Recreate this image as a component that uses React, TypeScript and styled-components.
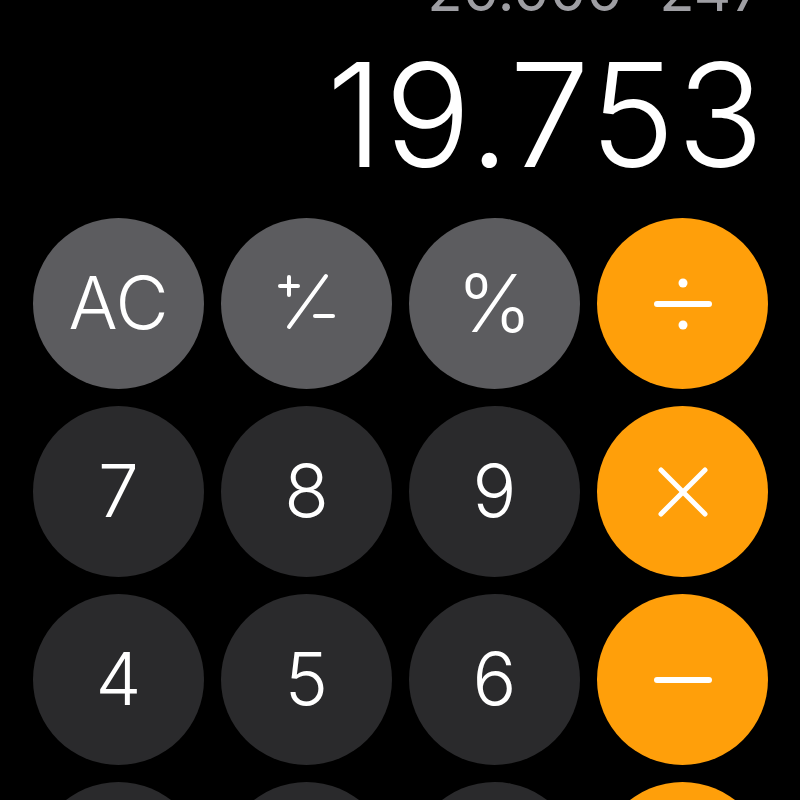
import React from "react";
import styled, { createGlobalStyle } from "styled-components";

const Global = createGlobalStyle`
  html, body {
    margin: 0;
    padding: 0;
    background: #000;
    overflow: hidden;
    height: 100%;
  }
  body {
    font-family: Inter, "Liberation Sans", sans-serif;
    -webkit-font-smoothing: antialiased;
  }
`;

const Screen = styled.div`
  width: 800px;
  height: 800px;
  background: #000;
  box-sizing: border-box;
  padding: 0 32px 0 33px;
  display: flex;
  flex-direction: column;
  overflow: hidden;
`;

const Display = styled.div`
  height: 218px;
  flex: 0 0 218px;
  display: flex;
  flex-direction: column;
  justify-content: flex-end;
  align-items: flex-end;
  padding-right: 4px;
`;

const Expression = styled.div`
  font-size: 58px;
  line-height: 1;
  font-weight: 400;
  color: #9e9ea3;
  margin-bottom: 24px;
  white-space: nowrap;
`;

const Result = styled.div`
  font-size: 144px;
  line-height: 1;
  font-weight: 300;
  color: #fff;
  margin-bottom: 31px;
  white-space: nowrap;
  letter-spacing: 1.5px;
  margin-right: -1.5px;
`;

const Pad = styled.div`
  display: grid;
  grid-template-columns: repeat(4, 171px);
  grid-auto-rows: 171px;
  column-gap: 17px;
  row-gap: 17px;
`;

type Kind = "fn" | "num" | "op";

const Key = styled.button<{ $kind: Kind }>`
  width: 171px;
  height: 171px;
  border-radius: 50%;
  border: none;
  padding: 0;
  margin: 0;
  display: flex;
  align-items: center;
  justify-content: center;
  font-family: Inter, "Liberation Sans", sans-serif;
  font-size: 73px;
  font-weight: 300;
  line-height: 1;
  color: #fff;
  background: ${(p) =>
    p.$kind === "fn" ? "#5c5c5f" : p.$kind === "op" ? "#ff9f0a" : "#2a2a2c"};
`;

const Label = styled.span<{ $size?: number }>`
  display: block;
  font-size: ${(p) => (p.$size ? `${p.$size}px` : "inherit")};
  transform: translateY(-1px);
`;

const Icon = styled.svg`
  display: block;
  overflow: visible;
`;

const PlusMinus = () => (
  <Icon width="60" height="60" viewBox="0 0 60 60" stroke="#fff" strokeLinecap="round" fill="none">
    <g strokeWidth="4">
      <line x1="3" y1="12" x2="21" y2="12" />
      <line x1="12" y1="3" x2="12" y2="21" />
      <line x1="12" y1="53" x2="49" y2="2" />
      <line x1="38" y1="42" x2="56" y2="42" />
    </g>
  </Icon>
);

const Divide = () => (
  <Icon width="60" height="60" viewBox="0 0 60 60" fill="#fff">
    <rect x="1" y="27" width="58" height="6" rx="3" />
    <circle cx="30" cy="9" r="4.5" />
    <circle cx="30" cy="51" r="4.5" />
  </Icon>
);

const Times = () => (
  <Icon width="60" height="60" viewBox="0 0 60 60" stroke="#fff" strokeWidth="5" strokeLinecap="round">
    <line x1="8" y1="8" x2="52" y2="52" />
    <line x1="52" y1="8" x2="8" y2="52" />
  </Icon>
);

const Minus = () => (
  <Icon width="60" height="60" viewBox="0 0 60 60" fill="#fff">
    <rect x="1" y="27" width="58" height="6" rx="3" />
  </Icon>
);

const Plus = () => (
  <Icon width="60" height="60" viewBox="0 0 60 60" fill="#fff">
    <rect x="1" y="27" width="58" height="6" rx="3" />
    <rect x="27" y="1" width="6" height="58" rx="3" />
  </Icon>
);

const Equals = () => (
  <Icon width="60" height="60" viewBox="0 0 60 60" fill="#fff">
    <rect x="1" y="18" width="58" height="6" rx="3" />
    <rect x="1" y="36" width="58" height="6" rx="3" />
  </Icon>
);

const CalcIcon = () => (
  <Icon width="50" height="60" viewBox="0 0 50 60" fill="none" stroke="#fff" strokeWidth="4">
    <rect x="3" y="3" width="44" height="54" rx="8" />
    <line x1="12" y1="16" x2="38" y2="16" />
  </Icon>
);

type KeyDef = { kind: Kind; label?: string; size?: number; icon?: React.ReactNode };

const keys: KeyDef[] = [
  { kind: "fn", label: "AC" },
  { kind: "fn", icon: <PlusMinus /> },
  { kind: "fn", label: "%", size: 80 },
  { kind: "op", icon: <Divide /> },
  { kind: "num", label: "7" },
  { kind: "num", label: "8" },
  { kind: "num", label: "9" },
  { kind: "op", icon: <Times /> },
  { kind: "num", label: "4" },
  { kind: "num", label: "5" },
  { kind: "num", label: "6" },
  { kind: "op", icon: <Minus /> },
  { kind: "num", label: "1" },
  { kind: "num", label: "2" },
  { kind: "num", label: "3" },
  { kind: "op", icon: <Plus /> },
  { kind: "num", icon: <CalcIcon /> },
  { kind: "num", label: "0" },
  { kind: "num", label: "," },
  { kind: "op", icon: <Equals /> },
];

export default function App() {
  return (
    <>
      <Global />
      <Screen>
        <Display>
          <Expression>20.000−247</Expression>
          <Result>19.753</Result>
        </Display>
        <Pad>
          {keys.map((k, i) => (
            <Key key={i} $kind={k.kind}>
              {k.icon ?? <Label $size={k.size}>{k.label}</Label>}
            </Key>
          ))}
        </Pad>
      </Screen>
    </>
  );
}
